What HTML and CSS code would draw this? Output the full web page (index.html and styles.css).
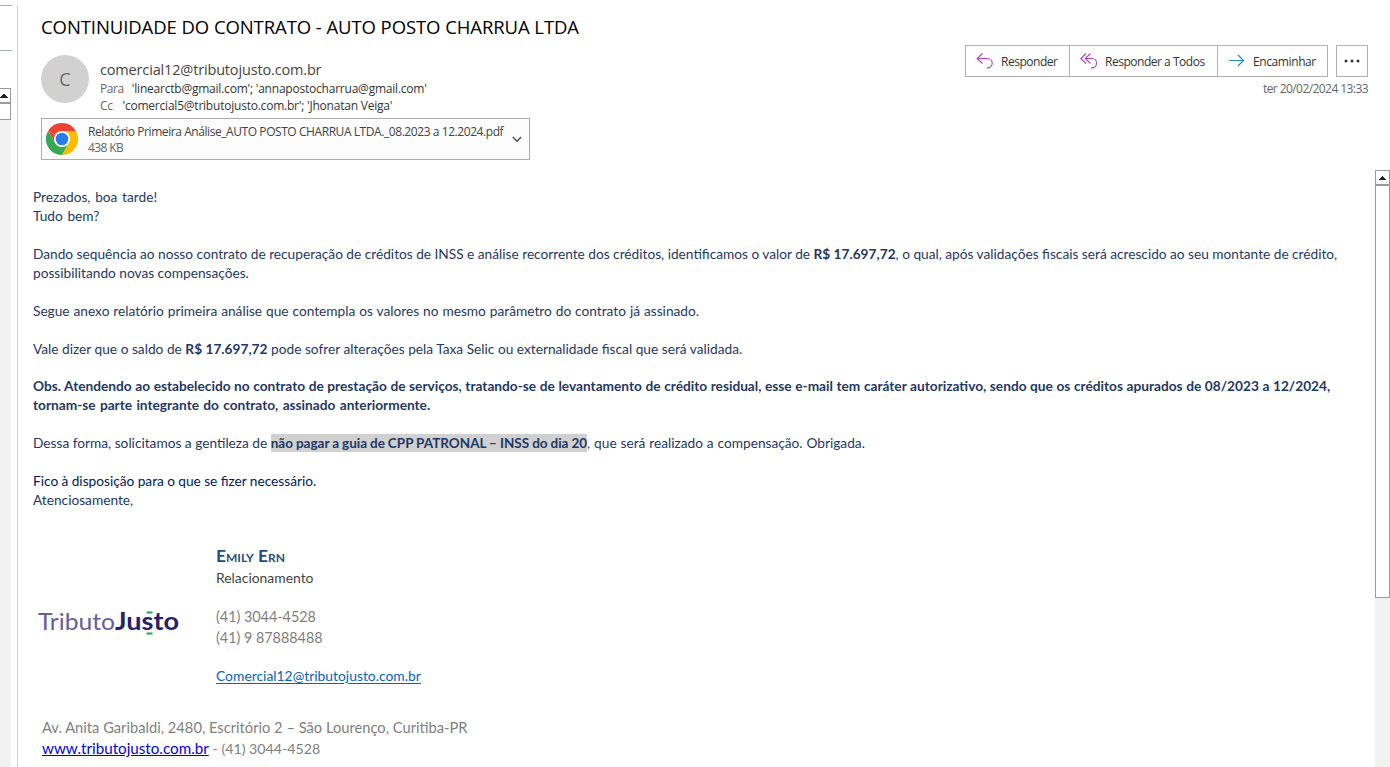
FILE: index.html
```html
<!DOCTYPE html>
<html lang="pt-BR">
<head>
<meta charset="utf-8">
<title>CONTINUIDADE DO CONTRATO - AUTO POSTO CHARRUA LTDA</title>
<link rel="stylesheet" href="styles.css">
</head>
<body>
<div class="window">
  <aside class="list-edge">
    <div class="list-head"></div>
    <div class="scrollbar list-scroll">
      <div class="scroll-up"><svg width="8" height="4" viewBox="0 0 8 4" shape-rendering="crispEdges"><path d="M3 0h2v1h1v1h1v1h1v1H0V3h1V2h1V1h1z"/></svg></div>
      <div class="scroll-thumb"></div>
    </div>
  </aside>
  <main class="reader">
    <header class="header">
      <h1 class="subject"><span class="t">CONTINUIDADE DO CONTRATO - AUTO POSTO CHARRUA LTDA</span></h1>
      <div class="meta">
        <div class="avatar">C</div>
        <div class="people">
          <div class="from"><span class="t">comercial12@tributojusto.com.br</span></div>
          <div class="row"><span class="label">Para</span><span class="t">'linearctb@gmail.com'; 'annapostocharrua@gmail.com'</span></div>
          <div class="row"><span class="label label-cc">Cc</span><span class="t">'comercial5@tributojusto.com.br'; 'Jhonatan Veiga'</span></div>
        </div>
        <div class="side">
          <div class="actions">
            <div class="group">
              <button class="btn reply"><svg width="18" height="18" viewBox="0 0 18 18" fill="none" stroke="#b146c2" stroke-width="1.2"><path d="M6.500 1.500 1.200 6.500l5.300 5M1.200 6.500h10.300a4.700 4.700 0 0 1 0 9.400H11"/></svg><span>Responder</span></button>
              <button class="btn all"><svg width="18" height="18" viewBox="0 0 18 18" fill="none" stroke="#b146c2" stroke-width="1.2"><path d="M6 1.500.8 6.500l5.200 5M10.500 1.500l-5.200 5 5.200 5M5.300 6.500h6.600a4.700 4.700 0 0 1 0 9.400H11"/></svg><span>Responder a Todos</span></button>
              <button class="btn forward"><svg width="18" height="18" viewBox="0 0 18 18" fill="none" stroke="#1e8bcd" stroke-width="1.2"><path d="M1 8.500h14.500M10 3l5.500 5.500L10 14"/></svg><span>Encaminhar</span></button>
            </div>
            <button class="btn more"><svg width="16" height="4" viewBox="0 0 16 4" fill="#333"><circle cx="2" cy="2" r="1.500"/><circle cx="8" cy="2" r="1.500"/><circle cx="14" cy="2" r="1.500"/></svg></button>
          </div>
          <div class="date">ter 20/02/2024 13:33</div>
        </div>
      </div>
      <div class="attachment">
        <svg class="chrome" width="32" height="32" viewBox="0 0 32 32">
          <path fill="#ea4335" d="M16 16 2.140 8A16 16 0 0 1 29.860 8z"/>
          <path fill="#ea4335" d="M2.140 8 9.070 20 16 16z"/>
          <path fill="#34a853" d="M2.140 8 9.070 20 16 24 22.930 20 16 32A16 16 0 0 1 2.140 8z"/>
          <path fill="#fbbc04" d="M29.860 8H16l6.930 12L16 32A16 16 0 0 0 29.860 8z"/>
          <circle cx="16" cy="16" r="8" fill="#fff"/>
          <circle cx="16" cy="16" r="6.300" fill="#2a7bea"/>
        </svg>
        <div class="file">
          <div class="file-name"><span class="t">Relatório Primeira Análise_AUTO POSTO CHARRUA LTDA._08.2023 a 12.2024.pdf</span></div>
          <div class="file-size">438 KB</div>
        </div>
        <svg class="chev" width="10" height="7" viewBox="0 0 10 7" fill="none" stroke="#555" stroke-width="1.600"><path d="m.8 1 4.200 4.200L9.200 1"/></svg>
      </div>
    </header>
    <div class="content">
      <article class="body">
        <p class="greeting">Prezados, boa tarde!<br>Tudo bem?</p>
        <p class="intro">Dando sequência ao nosso contrato de recuperação de créditos de INSS e análise recorrente dos créditos, identificamos o valor de <b>R$ 17.697,72</b>, o qual, após validações fiscais será acrescido ao seu montante de crédito,<br>possibilitando novas compensações.</p>
        <p class="report">Segue anexo relatório primeira análise que contempla os valores no mesmo parâmetro do contrato já assinado.</p>
        <p class="balance">Vale dizer que o saldo de <b>R$ 17.697,72</b> pode sofrer alterações pela Taxa Selic ou externalidade fiscal que será validada.</p>
        <p class="note"><b>Obs. Atendendo ao estabelecido no contrato de prestação de serviços, tratando-se de levantamento de crédito residual, esse e-mail tem caráter autorizativo, sendo que os créditos apurados de 08/2023 a 12/2024,<br><span class="note-end">tornam-se parte integrante do contrato, assinado anteriormente.</span></b></p>
        <p>Dessa forma, solicitamos a gentileza de <b class="mark">não pagar a guia de CPP PATRONAL – INSS do dia 20</b><span class="after">, que será realizado a compensação. Obrigada.</span></p>
        <p><span class="navy">Fico à disposição para o que se fizer necessário.</span><br>Atenciosamente,</p>
        <section class="signature">
          <svg class="logo" width="150" height="44" viewBox="0 0 150 44">
            <text class="logo-light" x="3" y="29" textLength="77" lengthAdjust="spacingAndGlyphs">Tributo</text>
            <text class="logo-bold" x="80" y="29" textLength="64" lengthAdjust="spacingAndGlyphs">Justo</text>
            <path fill="#27a567" d="M111.500 10.500h6v2h-6zM111.500 31.500h6v2h-6z"/>
          </svg>
          <div class="card">
            <div class="name">Emily Ern</div>
            <div class="role">Relacionamento</div>
            <div class="phones">(41) 3044-4528<br>(41) 9 87888488</div>
            <a class="mail">Comercial12@tributojusto.com.br</a>
          </div>
        </section>
        <footer class="address">Av. Anita Garibaldi, 2480, Escritório 2 – São Lourenço, Curitiba-PR<br><a class="site">www.tributojusto.com.br</a> <span class="tel">- (41) 3044-4528</span></footer>
      </article>
      <div class="scrollbar body-scroll">
        <div class="scroll-up"><svg width="7" height="4" viewBox="0 0 7 4" shape-rendering="crispEdges"><path d="M3 0h1v1h1v1h1v1h1v1H0V3h1V2h1V1h1z"/></svg></div>
        <div class="scroll-thumb"></div>
      </div>
    </div>
  </main>
</div>
</body>
</html>
```
FILE: styles.css
```css
* { box-sizing: border-box; }
body { margin: 0; background: #fff; font-family: "Open Sans", "Noto Sans", sans-serif; }
.window { display: flex; width: 1390px; height: 767px; overflow: hidden; }
.t { white-space: nowrap; }

/* message list edge */
.list-edge { width: 17px; padding-top: 5px; flex: none; display: flex; flex-direction: column; }
.list-head { width: 12px; height: 46px; border: solid #a9adb9; border-width: 1px 0; margin-bottom: 37px; }
.scrollbar { background: #f2f2f2; display: flex; flex-direction: column; }
.scroll-up { height: 16px; border: 1px solid #999; background: #fff; display: flex; align-items: center; justify-content: center; flex: none; }
.scroll-thumb { border: 1px solid #999; background: #fff; flex: none; }
.scroll-up svg { display: block; fill: #222; }
.list-scroll { width: 11px; flex: 1; }
.list-scroll .scroll-up, .list-scroll .scroll-thumb { border-left: 0; }
.list-scroll .scroll-up { justify-content: flex-start; height: 15px; }
.list-scroll .scroll-thumb { height: 17px; }

/* reading pane */
.reader { flex: 1; min-width: 0; margin-top: 5px; border-left: 1px solid #d0d0d0; display: flex; flex-direction: column; }
.header { height: 165px; padding: 9px 22px 0 23px; flex: none; }
.subject { margin: 0; height: 28px; line-height: 25px; font-size: 18.500px; font-weight: 400; letter-spacing: -0.08px; color: #000; }
.meta { display: flex; height: 71px; }
.avatar { width: 48px; height: 48px; margin-top: 13px; border-radius: 50%; background: #d1d1d1; color: #6a6a6a; font-size: 18px; line-height: 49px; text-align: center; flex: none; }
.people { margin-left: 11px; padding-top: 18px; }
.from { font-size: 14.500px; line-height: 20px; height: 20px; letter-spacing: -0.16px; color: #444; }
.row { display: flex; font-size: 12px; line-height: 17px; letter-spacing: -0.22px; color: #333; }
.label { color: #666; margin-right: 8px; letter-spacing: -0.4px; }
.label-cc { margin-right: 10px; }
.side { margin-left: auto; padding-top: 3px; }
.actions { display: flex; gap: 8px; }
.group { display: flex; border: 1px solid #b0b0b0; }
.btn { background: #fff; border: 0; padding: 0; height: 30px; display: flex; align-items: center; font: 12px "Open Sans", sans-serif; letter-spacing: -0.48px; color: #333; }
.btn span { white-space: nowrap; }
.reply { width: 103px; padding-left: 10px; gap: 7px; }
.all { width: 148px; border-left: 1px solid #b0b0b0; padding-left: 10px; gap: 7px; }
.forward { width: 110px; border-left: 1px solid #b0b0b0; padding-left: 10px; gap: 7px; letter-spacing: -0.4px; }
.more { width: 32px; height: 32px; border: 1px solid #b0b0b0; justify-content: center; }
.date { text-align: right; font-size: 12px; line-height: 17px; margin-top: 3px; letter-spacing: -0.57px; color: #666; }
.attachment { width: 489px; height: 42px; margin-top: 5px; border: 1px solid #ababab; background: #fcfcfc; display: flex; align-items: center; padding: 0 7px 0 4px; }
.file { margin-left: 10px; padding-top: 1px; font-size: 12px; line-height: 16px; color: #444; flex: 1; }
.file-name { letter-spacing: -0.43px; }
.file-size { letter-spacing: -0.6px; color: #666; }

.content { flex: 1; display: flex; justify-content: space-between; }
.body { width: 1340px; padding: 18px 0 0 15px; font-family: Lato, sans-serif; font-size: 13.700px; line-height: 18.940px; color: #1f3864; white-space: nowrap; }
.body p { margin: 0 0 18.940px; }
.greeting { word-spacing: 1.200px; }
.intro { word-spacing: -0.04px; }
.report { word-spacing: 0.45px; }
.balance { word-spacing: 0.05px; }
.note { word-spacing: 0.26px; }
.note-end { word-spacing: 1px; }
.mark { background: #d0d0d0; padding: 1px 0; font-size: 13.500px; word-spacing: -0.3px; }
.after { word-spacing: 0.4px; }
.navy { color: #002060; word-spacing: -0.15px; }
.body-scroll { width: 15px; flex: none; }
.body-scroll .scroll-up { height: 15px; }
.body-scroll .scroll-thumb { height: 413px; }

/* signature */
.signature { display: flex; padding-top: 16px; height: 172px; }
.logo { margin: 56px 0 0 2px; flex: none; font-family: Lato, sans-serif; font-size: 24px; fill: #292168; }
.logo-light { font-weight: 400; fill: #665d9b; }
.logo-bold { font-weight: 700; }
.card { margin-left: 31px; }
.name { font-size: 17.400px; line-height: 22px; font-weight: 700; font-variant: small-caps; color: #1f4e79; }
.role { font-size: 13.900px; line-height: 22px; color: #444; }
.phones { margin-top: 17px; font-size: 14.350px; line-height: 21px; color: #7f7f7f; }
.mail { display: inline-block; margin-top: 18px; font-size: 13.870px; line-height: 19px; color: #0563c1; text-decoration: underline; text-underline-offset: 2px; }
.address { margin: 16px 0 0 9px; font-size: 14.700px; line-height: 21px; color: #7f7f7f; }
.site { font-size: 15.200px; color: #0000ee; text-decoration: underline; }
.tel { font-size: 14.200px; }
```
